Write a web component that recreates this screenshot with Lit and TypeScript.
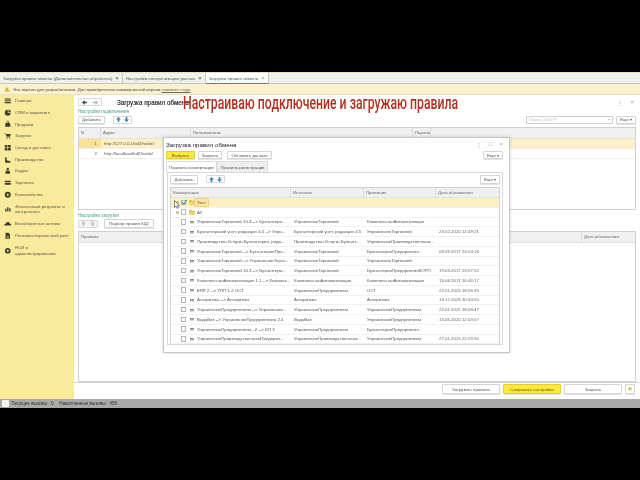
import { LitElement, css, html, svg } from "lit";
import { customElement } from "lit/decorators.js";

const MENU = [
  { icon: "menu", text: "Главное" },
  { icon: "pie", text: "CRM и маркетинг" },
  { icon: "bag", text: "Продажи" },
  { icon: "cart", text: "Закупки" },
  { icon: "grid", text: "Склад и доставка" },
  { icon: "plant", text: "Производство" },
  { icon: "man", text: "Кадры" },
  { icon: "cash", text: "Зарплата" },
  { icon: "coin", text: "Казначейство" },
  { icon: "bars", text: "Финансовый результат и\nконтроллинг", tall: true },
  { icon: "car", text: "Внеоборотные активы" },
  { icon: "doc", text: "Регламентированный учет" },
  { icon: "gear", text: "НСИ и\nадминистрирование", tall: true },
];

const RULES = [
  ["УправлениеТорговлей 10.3 --> Бухгалтери...", "УправлениеТорговлей", "КомплекснаяАвтоматизация", ""],
  ["Бухгалтерский учет, редакция 4.5 --> Упра...", "Бухгалтерский учет, редакция 4.5", "УправлениеТорговлей", "23.02.2020 14:49:21"],
  ["Производство+Услуги+Бухгалтерия, реда...", "Производство+Услуги+Бухгалт...", "УправлениеПроизводственным...", ""],
  ["УправлениеТорговлей --> БухгалтерияПре...", "УправлениеТорговлей", "БухгалтерияПредприятия", "08.09.2017 23:24:16"],
  ["УправлениеТорговлей --> УправлениеТорго...", "УправлениеТорговлей", "УправлениеТорговлей", ""],
  ["УправлениеТорговлей 10.3 --> Бухгалтери...", "УправлениеТорговлей", "БухгалтерияПредприятияКОРП", "19.03.2017 23:07:52"],
  ["КомплекснаяАвтоматизация 1.1 --> Комплек...", "КомплекснаяАвтоматизация", "КомплекснаяАвтоматизация", "19.08.2017 16:46:17"],
  ["ERP 2 --> УПП 1.2 ОСТ", "УправлениеПредприятием", "ОСТ", "22.01.2022 18:06:35"],
  ["Алгоритмы --> Алгоритмы", "Алгоритмы", "Алгоритмы", "18.12.2023 10:34:55"],
  ["УправлениеПредприятием --> Управление...", "УправлениеПредприятием", "УправлениеПредприятием", "22.01.2022 18:03:47"],
  ["ВодаВоз --> УправлениеПредприятием 2.4", "ВодаВоз", "УправлениеПредприятием", "13.06.2020 12:03:07"],
  ["УправлениеПредприятием - 2 --> БП 3", "УправлениеПредприятием", "БухгалтерияПредприятия", ""],
  ["УправлениеПроизводственнымПредприя...", "УправлениеПроизводственным...", "УправлениеПредприятием", "27.01.2023 22:29:50"],
];

const ICONS: Record<string, unknown> = {
  menu: svg`<path d="M1 2h8v1.4H1zM1 4.4h8v1.4H1zM1 6.8h8v1.4H1z"/>`,
  pie: svg`<path d="M5 1a4 4 0 1 0 4 4H5z"/><path d="M6 0.8v3.2h3.2A3.4 3.4 0 0 0 6 .8z"/>`,
  bag: svg`<path d="M2 4h6l.6 5H1.4zM3.6 4V2.4a1.4 1.4 0 0 1 2.8 0V4h-.8V2.4a.6.6 0 0 0-1.2 0V4z"/>`,
  cart: svg`<path d="M.6 1.6h1.8l.4 1.2h6.4L8 6.2H3.6L2 2.4H.6z"/><circle cx="4" cy="8" r=".9"/><circle cx="7.4" cy="8" r=".9"/>`,
  grid: svg`<path d="M1 1.4h3.6v3.2H1zM5.4 1.4H9v3.2H5.4zM1 5.4h3.6v3.2H1zM5.4 5.4H9v3.2H5.4z"/>`,
  plant: svg`<path d="M1.5 1.5h2v4l5 1.6v1.9h-7z"/>`,
  man: svg`<circle cx="5" cy="2.6" r="1.6"/><path d="M2 9V6.8C2 5.4 3.2 4.8 5 4.8s3 .6 3 2V9z"/>`,
  cash: svg`<path d="M1 2.4h8v2H1zM1 5.2h8v2.4H1z"/>`,
  coin: svg`<path fill-rule="evenodd" d="M5 1a4 4 0 1 1 0 8 4 4 0 0 1 0-8zm0 2.6a1.4 1.4 0 1 0 0 2.8 1.4 1.4 0 0 0 0-2.8z"/>`,
  bars: svg`<path d="M1.5 5h1.8v3.5H1.5zM4.2 3h1.8v5.5H4.2zM7 4.2h1.8v4.3H7z"/>`,
  car: svg`<path d="M.6 7.4V5.2l2-.6L4 2.6h2.4l1.4 2 1.6.6v2.2z"/>`,
  doc: svg`<path d="M2 1h4l2 2v6H2zM3.4 5h3.2v.8H3.4zM3.4 6.6h3.2v.8H3.4z" fill-rule="evenodd"/>`,
  gear: svg`<path fill-rule="evenodd" d="M5 1.2a3.8 3.8 0 1 1 0 7.6 3.8 3.8 0 0 1 0-7.6zm0 2.4a1.4 1.4 0 1 0 0 2.8 1.4 1.4 0 0 0 0-2.8z"/>`,
};

@customElement("app-root")
export class AppRoot extends LitElement {
  static styles = css`
    :host {
      display: block;
      width: 640px;
      height: 480px;
      background: #000;
      overflow: hidden;
      font: 4.35px "Liberation Sans", Arial, sans-serif;
      color: #555;
    }
    .screen {
      position: relative;
      margin-top: 72px;
      height: 336px;
      display: flex;
      flex-direction: column;
      background: #fff;
      filter: blur(0.35px);
      white-space: nowrap;
    }
    .tabs {
      height: 12px;
      flex: none;
      display: flex;
      align-items: stretch;
      background: #f0f0ee;
      border-bottom: 1px solid #c8c8bd;
      border-top: 1px solid #e6e0b8;
      box-sizing: border-box;
    }
    .tab {
      display: flex;
      align-items: center;
      gap: 3px;
      padding: 0 3px;
      border-right: 1px solid #c4c4bc;
    }
    .tab.on {
      background: #fff;
      border-bottom: 1px solid #3a9a78;
      margin-bottom: -1px;
    }
    .tab b {
      font-weight: 400;
      font-size: 6px;
      color: #444;
    }
    .tab.on b {
      color: #999;
    }
    .notice {
      height: 11px;
      flex: none;
      display: flex;
      align-items: center;
      gap: 3px;
      padding-left: 4px;
      background: #fdf2cd;
      color: #444;
      border-bottom: 1px solid #e6e0c4;
      box-sizing: border-box;
    }
    .notice u {
      color: #666;
    }
    .body {
      flex: 1;
      display: flex;
      min-height: 0;
    }
    .side {
      width: 74px;
      flex: none;
      background: #f9eb9b;
      box-sizing: border-box;
    }
    .item {
      height: 11.7px;
      display: flex;
      align-items: center;
      gap: 3.5px;
      padding-left: 4px;
      line-height: 5.4px;
    }
    .item.tall {
      height: 18px;
      padding-right: 2px;
      white-space: pre-line;
    }
    .item svg {
      width: 7.5px;
      height: 7.5px;
      flex: none;
      fill: #3f3f30;
    }
    .main {
      flex: 1;
      min-width: 0;
      display: flex;
      flex-direction: column;
      padding: 3px 4px 0 4px;
    }
    .titlebar {
      height: 8px;
      flex: none;
      display: flex;
      align-items: center;
    }
    .titlebar h1,
    .dlg h2 {
      margin: 0;
      font-weight: 400;
      color: #222;
    }
    .titlebar h1 {
      margin-left: 15px;
      font-size: 6.3px;
      -webkit-text-stroke: 0.15px #222;
    }
    .winbtns {
      margin-left: auto;
      display: flex;
      gap: 7px;
      color: #999;
      font-size: 6px;
      padding-right: 2px;
    }
    .caption {
      height: 8px;
      flex: none;
      display: flex;
      align-items: flex-end;
      color: #3f9d80;
      font-size: 4.5px;
    }
    .bar {
      display: flex;
      align-items: center;
      flex: none;
      height: 9px;
      margin-top: 1px;
    }
    .btn {
      height: 8px;
      display: flex;
      align-items: center;
      justify-content: center;
      background: #fff;
      border: 1px solid #d4d4d4;
      border-radius: 1px;
      box-sizing: border-box;
      color: #555;
      box-shadow: 0 1px 0 #e4e4e4;
    }
    .btn.main-btn {
      background: #fde93c;
      border-color: #e2cc30;
      color: #5b5a10;
    }
    .pair {
      display: flex;
      height: 8px;
      width: 19px;
      margin-left: 8px;
      border: 1px solid #d8d8d8;
      box-sizing: border-box;
      border-radius: 1px;
    }
    .pair span {
      flex: 1;
      display: flex;
      align-items: center;
      justify-content: center;
    }
    .pair svg {
      width: 5px;
      height: 5px;
      fill: #3c80ae;
    }
    .pair.off {
      margin-left: 0;
      width: 20px;
      background: #f4f4f4;
    }
    .pair.off svg {
      fill: #c4c4c4;
    }
    .pair.nav {
      width: 24px;
      background: #fff;
    }
    .pair.nav svg {
      fill: #444;
    }
    .pair.nav span + span svg {
      fill: #b4b4b4;
    }
    .search {
      margin-left: auto;
      width: 87px;
      height: 8px;
      display: flex;
      justify-content: space-between;
      align-items: center;
      padding: 0 2px;
      border: 1px solid #d0d0d0;
      box-sizing: border-box;
      color: #c4c4c4;
    }
    .more {
      width: 20px;
      margin-left: 3px;
    }
    .grid {
      border: 1px solid #cfcfcf;
      box-sizing: border-box;
      background: #fff;
    }
    .head {
      height: 10.5px;
      display: flex;
      align-items: center;
      background: #f0f0f0;
      border-bottom: 1px solid #e2e2e2;
      box-sizing: border-box;
      color: #666;
    }
    .head span {
      height: 100%;
      display: flex;
      align-items: center;
      padding-left: 2px;
      border-right: 1px solid #dcdcdc;
      box-sizing: border-box;
    }
    .conn {
      flex: none;
      height: 83px;
      margin-top: 3px;
    }
    .conn .line {
      height: 10px;
      display: flex;
      align-items: center;
      border-bottom: 1px solid #f0f0f0;
      box-sizing: border-box;
    }
    .conn .line.cur {
      background: #fcf0c4;
    }
    .conn .num {
      width: 22px;
      height: 100%;
      display: flex;
      align-items: center;
      justify-content: flex-end;
      padding-right: 4px;
      box-sizing: border-box;
      margin-right: 3px;
    }
    .conn .line.cur .num {
      background: #fbe296;
    }
    .w-num {
      width: 22px;
    }
    .w-addr {
      width: 90px;
    }
    .w-user {
      width: 222px;
    }
    .load {
      flex: 1;
      margin-top: 3px;
      min-height: 0;
    }
    .load .head .fill {
      flex: 1;
    }
    .load .head .date {
      width: 53px;
      border-right: none;
    }
    .pick {
      margin-left: 6px;
      width: 50px;
      height: 9px;
    }
    .footer {
      height: 17px;
      flex: none;
      margin: 0 -4px;
      display: flex;
      justify-content: flex-end;
      align-items: center;
      gap: 3px;
      padding: 0 5px 4px 0;
      border-top: 1px solid #d4d4d4;
      box-sizing: border-box;
    }
    .footer .btn {
      width: 58px;
      height: 9.5px;
    }
    .footer .star {
      width: 10px;
      color: #e0b830;
      font-size: 7px;
    }
    .status {
      height: 9px;
      flex: none;
      display: flex;
      align-items: center;
      gap: 3.5px;
      padding-left: 2px;
      background: #a9a9a9;
      color: #333;
      font-size: 4.6px;
    }
    .status i {
      width: 7px;
      height: 7px;
      background: #f4f4f4;
      border-radius: 1px;
      margin-right: -1px;
    }
    .status span + span {
      margin-left: 2px;
    }
    .headline {
      position: absolute;
      left: 183px;
      top: 20px;
      transform: scaleX(0.645);
      transform-origin: left top;
      font: 500 19px/22px Roboto, sans-serif;
      color: #b3301f;
    }
    .dlg {
      position: absolute;
      left: 163px;
      top: 65px;
      width: 347px;
      height: 216px;
      background: #fff;
      border: 1px solid #c6c6c6;
      box-sizing: border-box;
      box-shadow: 0 0 3px rgba(0, 0, 0, 0.18);
      padding: 1.5px 6px 0 2px;
      display: flex;
      flex-direction: column;
    }
    .dlg h2 {
      height: 9px;
      display: flex;
      align-items: center;
      font-size: 6.2px;
      flex: none;
      justify-content: space-between;
    }
    .dlg h2 .winbtns {
      font-size: 6px;
      padding-right: 0;
    }
    .dlg .tools {
      height: 9px;
      flex: none;
      margin-top: 2px;
      display: flex;
      gap: 3px;
      align-items: center;
    }
    .dlg .tools .btn {
      height: 8.5px;
    }
    .dlg .tools .last {
      margin-left: auto;
      width: 20px;
    }
    .pages {
      height: 12px;
      flex: none;
      display: flex;
      margin-top: 1px;
    }
    .pages span {
      width: 51px;
      display: flex;
      align-items: center;
      justify-content: center;
      border: 1px solid #dcdcdc;
      border-bottom: none;
      box-sizing: border-box;
    }
    .pages .off {
      background: #eeeeee;
    }
    .panel {
      width: 336px;
      height: 173px;
      flex: none;
      margin: -1px 0 0 1px;
      border: 1px solid #d8d8d8;
      padding: 2px 2px 0 2px;
      box-sizing: border-box;
      background: #fff;
    }
    .panel .bar {
      margin: 0;
      height: 9.5px;
    }
    .panel .bar .btn {
      height: 8.5px;
    }
    .panel .bar .more {
      margin-left: auto;
    }
    .rules {
      margin-top: 3px;
      height: 156.5px;
      width: 330px;
    }
    .rules .head {
      height: 10px;
    }
    .c1,
    .c2,
    .c3,
    .c4 {
      flex: none;
      overflow: hidden;
    }
    .c1 {
      width: 120px;
    }
    .c2 {
      width: 73px;
    }
    .c3 {
      width: 72px;
    }
    .c4 {
      width: 63px;
    }
    .rules .head .c4 {
      border-right: none;
    }
    .row {
      height: 9.75px;
      display: flex;
      align-items: center;
      border-bottom: 1px solid #f1f1f1;
      box-sizing: border-box;
    }
    .row.cur {
      background: #fdf0c3;
    }
    .row .c1 {
      display: flex;
      align-items: center;
      height: 100%;
    }
    .row .c2,
    .row .c3,
    .row .c4 {
      padding-left: 3px;
      box-sizing: border-box;
    }
    .row .c4 {
      color: #666;
    }
    .plus {
      width: 3px;
      height: 3px;
      margin-left: 5px;
      border-radius: 50%;
      background: #b9b9a0;
      flex: none;
    }
    .gap {
      width: 8px;
      flex: none;
    }
    .check {
      width: 3.5px;
      height: 3.5px;
      margin-left: 1.5px;
      border: 1px solid #b4b4b4;
      background: #fff;
      box-sizing: content-box;
      flex: none;
      position: relative;
    }
    .check svg {
      position: absolute;
      left: -1px;
      top: -2px;
      width: 6.5px;
      height: 6.5px;
    }
    .kind {
      width: 6px;
      height: 6px;
      margin: 0 2px 0 3px;
      flex: none;
    }
    .focus {
      border: 1px solid #f2d27a;
      background: #fce59c;
      padding: 0 2px;
      margin-left: -3px;
      line-height: 7.5px;
    }
    .cursor {
      position: absolute;
      left: 174px;
      top: 128px;
      width: 6px;
      height: 9px;
    }
  `;

  private icon(name: string) {
    return html`<svg viewBox="0 0 10 10">${ICONS[name]}</svg>`;
  }

  private folder() {
    return html`<svg class="kind" viewBox="0 0 6 6">
      <path d="M0 1h2.4l.6.8h3v3.8H0z" fill="#e8b83c" />
      <path d="M0 2.6h6v3H0z" fill="#f3d268" />
    </svg>`;
  }

  private dash() {
    return html`<svg class="kind" viewBox="0 0 6 6"><path d="M1 2h4v.8H1zM1 3.4h4v.8H1z" fill="#666" /></svg>`;
  }

  private upDown() {
    return html`
      <span><svg viewBox="0 0 6 6"><path d="M3 0l3 3H4v3H2V3H0z" /></svg></span>
      <span><svg viewBox="0 0 6 6"><path d="M3 6L0 3h2V0h2v3h2z" /></svg></span>
    `;
  }

  private tree(mark: string, label: string, current = false) {
    return html`<div class="row ${current ? "cur" : ""}">
      <div class="c1">
        <span class="plus"></span>
        <span class="check">
          ${current
            ? html`<svg viewBox="0 0 7 7"><path d="M1 3.4l2 2L6.4.8" fill="none" stroke="#2f9a55" stroke-width="1.2" /></svg>`
            : ""}
        </span>
        ${this.folder()}
        <span class=${mark}>${label}</span>
      </div>
    </div>`;
  }

  render() {
    return html`
      <div class="screen">
        <div class="tabs">
          <div class="tab"><span>Загрузка правил обмена (Дополнительная обработка)</span><b>×</b></div>
          <div class="tab"><span>Настройки синхронизации данных</span><b>×</b></div>
          <div class="tab on"><span>Загрузка правил обмена</span><b>×</b></div>
        </div>
        <div class="notice">
          <svg width="6" height="6" viewBox="0 0 6 6"><path d="M3 .4L5.8 5.6H.2z" fill="#e8b020" /></svg>
          <span>Эта версия для разработчиков. Для приобретения коммерческой версии <u>нажмите сюда</u></span>
        </div>
        <div class="body">
          <nav class="side">
            ${MENU.map(
              (m) => html`<div class="item ${m.tall ? "tall" : ""}">${this.icon(m.icon)}<span>${m.text}</span></div>`
            )}
          </nav>
          <div class="main">
            <div class="titlebar">
              <div class="pair nav off">
                <span><svg viewBox="0 0 6 6"><path d="M0 3l3-3v2h3v2H3v2z" /></svg></span>
                <span><svg viewBox="0 0 6 6"><path d="M6 3L3 6V4H0V2h3V0z" /></svg></span>
              </div>
              <h1>Загрузка правил обмена</h1>
              <div class="winbtns"><span>⋮</span><span>×</span></div>
            </div>
            <div class="caption">Настройки подключения</div>
            <div class="bar">
              <div class="btn" style="width:27px">Добавить</div>
              <div class="pair">${this.upDown()}</div>
              <div class="search"><span>Поиск (Ctrl+F)</span><span>▾</span></div>
              <div class="btn more">Еще ▾</div>
            </div>
            <div class="grid conn">
              <div class="head">
                <span class="w-num">N</span>
                <span class="w-addr">Адрес</span>
                <span class="w-user">Пользователь</span>
                <span>Пароль</span>
              </div>
              <div class="line cur"><span class="num">1</span><span>http://127.0.0.1/kd2/hs/dx/</span></div>
              <div class="line"><span class="num">2</span><span>http://localhost/kd2/hs/dx/</span></div>
            </div>
            <div class="caption">Настройки загрузки</div>
            <div class="bar">
              <div class="pair off">${this.upDown()}</div>
              <div class="btn pick">Подбор правил КД2</div>
            </div>
            <div class="grid load">
              <div class="head">
                <span class="fill">Правила</span>
                <span class="date">Дата обновления</span>
              </div>
            </div>
            <div class="footer">
              <div class="btn">Загрузить правила</div>
              <div class="btn main-btn">Сохранить настройки</div>
              <div class="btn">Закрыть</div>
              <div class="btn star">★</div>
            </div>
          </div>
        </div>
        <div class="status">
          <i></i><span>Текущие вызовы:&nbsp; 0</span><span>Накопленные вызовы:&nbsp; 456</span>
        </div>

        <div class="headline">Настраиваю подключение и загружаю правила</div>

        <div class="dlg">
          <h2>
            <span>Загрузка правил обмена</span>
            <div class="winbtns"><span>⋮</span><span>□</span><span>×</span></div>
          </h2>
          <div class="tools">
            <div class="btn main-btn" style="width:29px">Выбрать</div>
            <div class="btn" style="width:24px">Закрыть</div>
            <div class="btn" style="width:45px;margin-left:2px">Обновить данные</div>
            <div class="btn last">Еще ▾</div>
          </div>
          <div class="pages">
            <span>Правила конвертации</span>
            <span class="off">Правила регистрации</span>
          </div>
          <div class="panel">
            <div class="bar">
              <div class="btn" style="width:28px">Добавить</div>
              <div class="pair">${this.upDown()}</div>
              <div class="btn more">Еще ▾</div>
            </div>
            <div class="grid rules">
              <div class="head">
                <span class="c1">Конвертация</span>
                <span class="c2">Источник</span>
                <span class="c3">Приемник</span>
                <span class="c4">Дата обновления</span>
              </div>
              ${this.tree("focus", "Тест", true)}
              ${this.tree("", "АУ")}
              ${RULES.map(
                ([name, from, to, date]) => html`<div class="row">
                  <div class="c1">
                    <span class="gap"></span>
                    <span class="check"></span>
                    ${this.dash()}
                    <span>${name}</span>
                  </div>
                  <div class="c2">${from}</div>
                  <div class="c3">${to}</div>
                  <div class="c4">${date}</div>
                </div>`
              )}
            </div>
          </div>
        </div>

        <svg class="cursor" viewBox="0 0 6 9">
          <path d="M.5.5v7l1.6-1.4L3.2 8.4l1.2-.5-1.1-2.3h2.1z" fill="#fff" stroke="#333" stroke-width=".6" />
        </svg>
      </div>
    `;
  }
}
